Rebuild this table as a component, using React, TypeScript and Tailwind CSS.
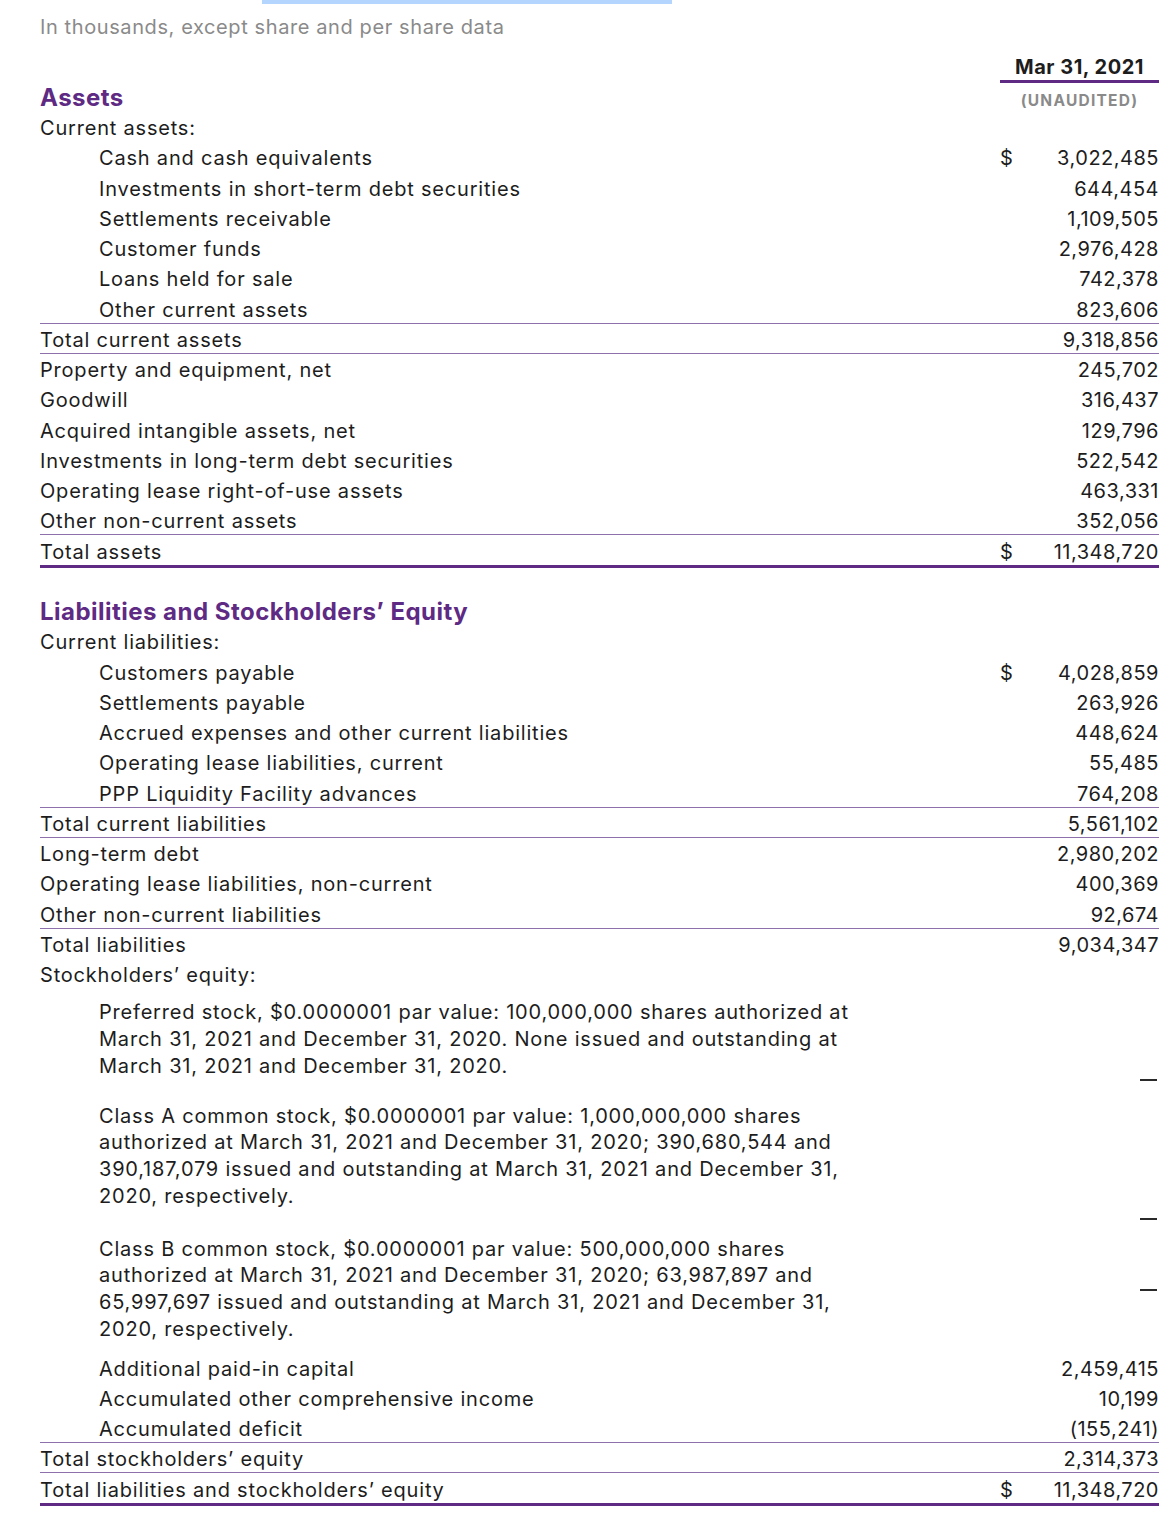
import React from "react"

type Line = "none" | "thin" | "thick"

interface RowProps {
  label: string
  value?: string
  dollar?: boolean
  indent?: boolean
  line?: Line
}

function Row({ label, value, dollar, indent, line = "none" }: RowProps) {
  return (
    <div className="h-[30.25px] pt-[2px]">
      <div
        className={
          "flex items-center leading-[26px] " +
          (line === "thick"
            ? "h-[29px] border-b-[3px] border-[#5e2a84]"
            : line === "thin"
              ? "h-[27px] border-b border-[#8e70ad]"
              : "h-[27px] border-b border-transparent")
        }
      >
        <div className={"flex-1 whitespace-nowrap " + (indent ? "pl-[59px]" : "")}>{label}</div>
        <div className="flex w-[159px] justify-between">
          <span>{dollar ? "$" : ""}</span>
          <span className="tracking-[0.025em]">{value}</span>
        </div>
      </div>
    </div>
  )
}

function Heading({ children }: { children: React.ReactNode }) {
  return (
    <div className="h-[30.25px] pt-[2px] leading-[26px] text-[24px] font-bold tracking-[0.02em] text-[#5e2a84]">
      {children}
    </div>
  )
}

interface ParaProps {
  lines: string[]
  dashTop: string
  padBottom: string
}

// long stock descriptions, dash sits in the value column
function Para({ lines, dashTop, padBottom }: ParaProps) {
  return (
    <div className="flex">
      <div className={"flex-1 pl-[59px] pt-[9px] leading-[26.75px] " + padBottom}>
        {lines.map((l) => (
          <div key={l} className="whitespace-nowrap">{l}</div>
        ))}
      </div>
      <div className={"flex w-[159px] items-start justify-end pr-[2px] " + dashTop}>
        <span className="block h-[2px] w-[17px] bg-[#2a2a2a]" aria-label="—" />
      </div>
    </div>
  )
}

export default function App() {
  return (
    <div className="min-h-[1524px] bg-white pl-[40px] pr-[15px] text-[20px] tracking-[0.04em] text-[#1d1d1d] font-['Inter',sans-serif]">
      <div className="ml-[222px] h-[4px] w-[410px] bg-[#b4d5fe]" />
      <div className="mt-[8px] h-[30px] leading-[30px] tracking-[0.03em] text-[#8a8a8a]">
        In thousands, except share and per share data
      </div>

      <div className="mt-[11px] flex items-end justify-between">
        <div className="h-[30px] leading-[30px] text-[24px] font-bold tracking-[0.02em] text-[#5e2a84]">Assets</div>
        <div className="w-[159px] pb-[2px] text-center">
          <div className="h-[30px] border-b-[3px] border-[#5e2a84] leading-[28px] font-bold tracking-[0.025em]">
            Mar 31, 2021
          </div>
          <div className="mt-[8px] leading-[20px] text-[15.5px] font-bold tracking-[0.08em] text-[#8a8a8a]">
            (UNAUDITED)
          </div>
        </div>
      </div>

      <Row label="Current assets:" />
      <Row indent label="Cash and cash equivalents" dollar value="3,022,485" />
      <Row indent label="Investments in short-term debt securities" value="644,454" />
      <Row indent label="Settlements receivable" value="1,109,505" />
      <Row indent label="Customer funds" value="2,976,428" />
      <Row indent label="Loans held for sale" value="742,378" />
      <Row indent label="Other current assets" value="823,606" line="thin" />
      <Row label="Total current assets" value="9,318,856" line="thin" />
      <Row label="Property and equipment, net" value="245,702" />
      <Row label="Goodwill" value="316,437" />
      <Row label="Acquired intangible assets, net" value="129,796" />
      <Row label="Investments in long-term debt securities" value="522,542" />
      <Row label="Operating lease right-of-use assets" value="463,331" />
      <Row label="Other non-current assets" value="352,056" line="thin" />
      <Row label="Total assets" dollar value="11,348,720" line="thick" />

      <div className="h-[30.25px]" />

      <Heading>Liabilities and Stockholders’ Equity</Heading>
      <Row label="Current liabilities:" />
      <Row indent label="Customers payable" dollar value="4,028,859" />
      <Row indent label="Settlements payable" value="263,926" />
      <Row indent label="Accrued expenses and other current liabilities" value="448,624" />
      <Row indent label="Operating lease liabilities, current" value="55,485" />
      <Row indent label="PPP Liquidity Facility advances" value="764,208" line="thin" />
      <Row label="Total current liabilities" value="5,561,102" line="thin" />
      <Row label="Long-term debt" value="2,980,202" />
      <Row label="Operating lease liabilities, non-current" value="400,369" />
      <Row label="Other non-current liabilities" value="92,674" line="thin" />
      <Row label="Total liabilities" value="9,034,347" />
      <Row label="Stockholders’ equity:" />

      <Para
        dashTop="pt-[89px]"
        padBottom="pb-[14px]"
        lines={[
          "Preferred stock, $0.0000001 par value: 100,000,000 shares authorized at",
          "March 31, 2021 and December 31, 2020. None issued and outstanding at",
          "March 31, 2021 and December 31, 2020.",
        ]}
      />
      <Para
        dashTop="pt-[124px]"
        padBottom="pb-[17px]"
        lines={[
          "Class A common stock, $0.0000001 par value: 1,000,000,000 shares",
          "authorized at March 31, 2021 and December 31, 2020; 390,680,544 and",
          "390,187,079 issued and outstanding at March 31, 2021 and December 31,",
          "2020, respectively.",
        ]}
      />
      <Para
        dashTop="pt-[62px]"
        padBottom="pb-[11px]"
        lines={[
          "Class B common stock, $0.0000001 par value: 500,000,000 shares",
          "authorized at March 31, 2021 and December 31, 2020; 63,987,897 and",
          "65,997,697 issued and outstanding at March 31, 2021 and December 31,",
          "2020, respectively.",
        ]}
      />

      <Row indent label="Additional paid-in capital" value="2,459,415" />
      <Row indent label="Accumulated other comprehensive income" value="10,199" />
      <Row indent label="Accumulated deficit" value="(155,241)" line="thin" />
      <Row label="Total stockholders’ equity" value="2,314,373" line="thin" />
      <Row label="Total liabilities and stockholders’ equity" dollar value="11,348,720" line="thick" />
    </div>
  )
}
